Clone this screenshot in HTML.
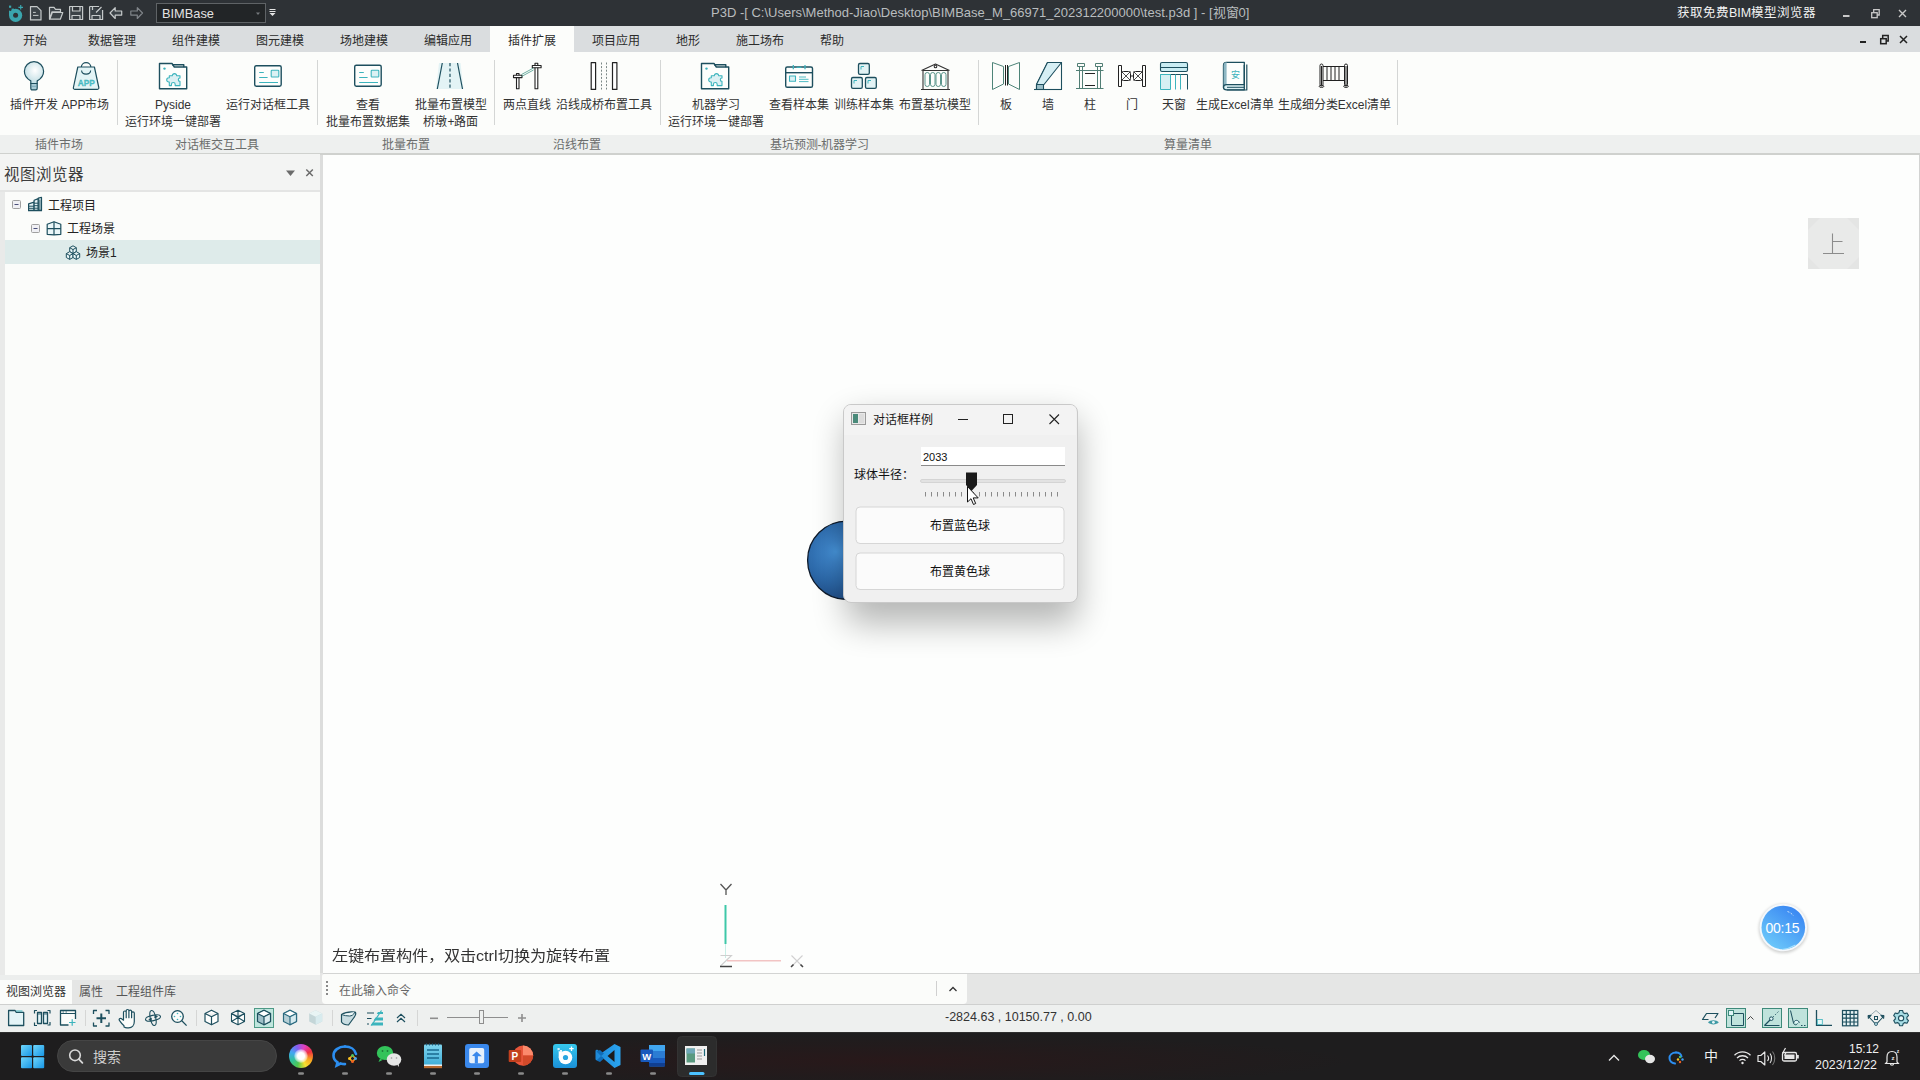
<!DOCTYPE html>
<html lang="zh-CN">
<head>
<meta charset="utf-8">
<style>
*{margin:0;padding:0;box-sizing:border-box}
html,body{width:1920px;height:1080px;overflow:hidden;background:#fdfefd;font-family:"Liberation Sans",sans-serif;font-size:12px;color:#333}
.a{position:absolute}
.t{position:absolute;white-space:nowrap;line-height:1}
#title{left:0;top:0;width:1920px;height:26px;background:#2e3236}
#menu{left:0;top:26px;width:1920px;height:26px;background:#dadddf}
#ribbon{left:0;top:52px;width:1920px;height:83px;background:#fcfdfb}
#glabels{left:0;top:135px;width:1920px;height:18px;background:#eef0ef}
#gline{left:0;top:153px;width:1920px;height:1px;background:#cfd1ce}
#lpanel{left:0;top:154px;width:320px;height:821px;background:#e9eae9}
#lhead{left:0;top:154px;width:320px;height:36px;background:#f3f4f3}
#ltree{left:5px;top:192px;width:315px;height:783px;background:#fbfcfa}
#lsplit{left:320px;top:155px;width:3px;height:820px;background:#dcdddc}
#view{left:323px;top:155px;width:1597px;height:820px;background:#fdfefd}
#cmdbar{left:0;top:973px;width:1920px;height:31px}
#status{left:0;top:1004px;width:1920px;height:28px;background:#eef0ef;border-top:1px solid #cfd0cf}
.mt{top:9px;font-size:12px;color:#2b2b2b}
.rl{width:140px;text-align:center;font-size:12px;color:#333}
.gl{top:4px;width:140px;text-align:center;font-size:12px;color:#6b6d6c}
#taskbar{left:0;top:1032px;width:1920px;height:48px;background:#1e1d1e}
</style>
</head>
<body>
<div id="title" class="a">
<svg class="a" style="left:0;top:0" width="300" height="26" viewBox="0 0 300 26">
 <g fill="#3aa5ad">
  <circle cx="15.6" cy="15.3" r="6.6"/>
  <path d="M9 15.3v-4.8l3.5 1.2v3.6z"/>
  <rect x="11.6" y="8.6" width="2.4" height="2.2"/>
  <rect x="9" y="5.6" width="2.2" height="2.2"/>
  <path d="M20.7 5v4.6M18.4 7.3h4.6" stroke="#3aa5ad" stroke-width="1.2"/>
 </g>
 <circle cx="15.6" cy="15.3" r="2.5" fill="#2e3236"/>
 <g fill="#3b4247" stroke="#c5c9ca" stroke-width="1.2" stroke-linejoin="round">
  <path d="M30.5 6.6h6.5l4 4v9.3h-10.5z"/>
  <path d="M33 12.4h2.8M33 15.4h5.5" stroke-width="1"/>
  <path d="M49.5 7.3h4.5l1.5 2h5v2.5h-8.5l-2.5 7.5z M52.3 12.5h10.5l-2.5 6.7h-10.5z"/>
  <path d="M69.6 6.5h13v13h-13z M72.5 6.5v4.5h7.5v-4.5 M72 19.5v-4h8v4"/>
  <path d="M89.6 6.5h9.5 M102.6 10v9.5h-13v-13 M92.5 6.5v3.5 M92 19.5v-4h8v4 M96 12.5l5.5-5.5"/>
  <path d="M110 13l5.2-5.3v3.3h6.5v4.1h-6.5v3.4z"/>
 </g>
 <path d="M142.5 13l-5.2-5.3v3.3h-6.5v4.1h6.5v3.4z" fill="none" stroke="#80858a" stroke-width="1.2" stroke-linejoin="round"/>
 <rect x="156.5" y="3.5" width="109" height="19" fill="#222527" stroke="#5f6366"/>
 <path d="M256 12.5h4l-2 2.5z" fill="#777b7e"/>
 <path d="M269.5 9.5h6M269.5 11.5h6" stroke="#e6e6e6" stroke-width="1"/><path d="M269.5 13h6l-3 3z" fill="#e6e6e6"/>
</svg>
<div class="t" style="left:162px;top:8px;font-size:12.8px;color:#e2e2e2">BIMBase</div>
<div class="t" id="ttl" style="left:711px;top:6px;font-size:13px;color:#b9bdbf">P3D -[ C:\Users\Method-Jiao\Desktop\BIMBase_M_66971_202312200000\test.p3d ] - [视窗0]</div>
<div class="t" id="ttr" style="left:1677px;top:7px;font-size:12.5px;color:#f2f2f2">获取免费BIM模型浏览器</div>
<svg class="a" style="left:1830px;top:0" width="90" height="26">
 <rect x="13" y="15" width="6.5" height="2" fill="#c9c9c9"/>
 <g fill="none" stroke="#c9c9c9" stroke-width="1.3"><rect x="41.7" y="12.7" width="5.5" height="5"/><path d="M43.7 12.5v-2.8h5.5v5.3h-2"/></g>
 <path d="M69 10l7 7M76 10l-7 7" stroke="#c9c9c9" stroke-width="1.4"/>
</svg>
</div>
<div id="menu" class="a">
<div class="a" style="left:490px;top:0;width:84px;height:26px;background:#fcfdfb"></div>
<div class="t mt" style="left:23px">开始</div>
<div class="t mt" style="left:88px">数据管理</div>
<div class="t mt" style="left:172px">组件建模</div>
<div class="t mt" style="left:256px">图元建模</div>
<div class="t mt" style="left:340px">场地建模</div>
<div class="t mt" style="left:424px">编辑应用</div>
<div class="t mt" style="left:508px">插件扩展</div>
<div class="t mt" style="left:592px">项目应用</div>
<div class="t mt" style="left:676px">地形</div>
<div class="t mt" style="left:736px">施工场布</div>
<div class="t mt" style="left:820px">帮助</div>
<svg class="a" style="left:1830px;top:0" width="90" height="26">
 <rect x="30" y="15" width="6" height="2" fill="#222"/>
 <g fill="none" stroke="#222" stroke-width="1.5"><rect x="50.7" y="12.7" width="5.5" height="5"/><path d="M52.7 12.5v-3h5.5v5.5h-2"/></g>
 <path d="M70 10l7 7M77 10l-7 7" stroke="#222" stroke-width="1.5"/>
</svg>
</div>
<div id="ribbon" class="a">
<div class="t rl" style="left:-36px;top:47px">插件开发</div>
<div class="t rl" style="left:15.5px;top:47px">APP市场</div>
<div class="t rl" style="left:103px;top:47px">Pyside</div>
<div class="t rl" style="left:103px;top:64px">运行环境一键部署</div>
<div class="t rl" style="left:198px;top:47px">运行对话框工具</div>
<div class="t rl" style="left:298px;top:47px">查看</div>
<div class="t rl" style="left:298px;top:64px">批量布置数据集</div>
<div class="t rl" style="left:381px;top:47px">批量布置模型</div>
<div class="t rl" style="left:381px;top:64px">桥墩+路面</div>
<div class="t rl" style="left:457px;top:47px">两点直线</div>
<div class="t rl" style="left:534px;top:47px">沿线成桥布置工具</div>
<div class="t rl" style="left:646px;top:47px">机器学习</div>
<div class="t rl" style="left:646px;top:64px">运行环境一键部署</div>
<div class="t rl" style="left:729px;top:47px">查看样本集</div>
<div class="t rl" style="left:794px;top:47px">训练样本集</div>
<div class="t rl" style="left:865px;top:47px">布置基坑模型</div>
<div class="t rl" style="left:936px;top:47px">板</div>
<div class="t rl" style="left:978px;top:47px">墙</div>
<div class="t rl" style="left:1020px;top:47px">柱</div>
<div class="t rl" style="left:1062px;top:47px">门</div>
<div class="t rl" style="left:1104px;top:47px">天窗</div>
<div class="t rl" style="left:1165px;top:47px">生成Excel清单</div>
<div class="t rl" style="left:1264.5px;top:47px">生成细分类Excel清单</div>
<div class="a" style="left:117px;top:8px;width:1px;height:65px;background:#d4d6d5"></div>
<div class="a" style="left:317px;top:8px;width:1px;height:65px;background:#d4d6d5"></div>
<div class="a" style="left:494px;top:8px;width:1px;height:65px;background:#d4d6d5"></div>
<div class="a" style="left:660px;top:8px;width:1px;height:65px;background:#d4d6d5"></div>
<div class="a" style="left:978px;top:8px;width:1px;height:65px;background:#d4d6d5"></div>
<div class="a" style="left:1397px;top:8px;width:1px;height:65px;background:#d4d6d5"></div>
<svg id="ricons" class="a" style="left:0;top:0" width="1400" height="83"><g transform="translate(0,-52)" fill="none" stroke="#1d4f5e" stroke-width="1.4" stroke-linejoin="round">
 <defs>
  <radialGradient id="bulbg" cx="0.55" cy="0.4" r="0.6"><stop offset="0" stop-color="#ffffff"/><stop offset="1" stop-color="#bfdde3"/></radialGradient>
 </defs>
 <!-- bulb -->
 <path d="M30.8 83.5v-2.6c-3.8-2-6.4-5.6-6.4-9.6a9.6 9.6 0 0 1 19.2 0c0 4-2.6 7.6-6.4 9.6v2.6z" fill="url(#bulbg)" stroke-width="1.2"/>
 <path d="M30.8 83.5h6.4v4.8c0 1-.6 1.6-1.4 1.6h-3.6c-.8 0-1.4-.6-1.4-1.6z" fill="#a8ccd6" stroke-width="1.2"/>
 <path d="M31.5 86.3h5" stroke="#6fa0b0" stroke-width="0.8"/>
 <!-- APP bag -->
 <path d="M81.3 67.5c0-6.5 9.6-6.5 9.6 0" stroke-width="1.2"/>
 <path d="M77.8 67h16.6l4.4 20.5c.2 1-.3 1.8-1.3 1.8h-22.8c-1 0-1.5-.8-1.3-1.8z" fill="#e3f4f6" stroke-width="1.2"/>
 <path d="M81.6 70.5c0 4.8 9 4.8 9 0" stroke-width="1.1"/>
 <text x="86.2" y="85.5" font-family="Liberation Sans" font-size="9.5" font-weight="bold" fill="#4cc4cc" stroke="#3aa8b0" stroke-width="0.3" text-anchor="middle" textLength="17" lengthAdjust="spacingAndGlyphs">APP</text>
 <!-- pyside folder -->
 <g id="pyf">
  <path d="M159.5 63.5h12.5l2.3 3.5h12.4v21.7h-27.2z" fill="#fdfefc"/>
  <path d="M172 64.8h11.8v2.5" />
  <circle cx="164.5" cy="68.6" r="1.2" fill="#3cb4bd" stroke="none"/>
  <path d="M169.3 75.8h3a2.2 2.2 0 1 1 4.4 0h3.3v2.2a1.7 1.7 0 0 0 0 3.4v4.2h-4.8v-1.2a1.9 1.9 0 0 0-3.8 0v1.2h-2.1v-3.6h-.5a2.1 2.1 0 0 1 0-4.2h.5z" fill="#dcf0f3" stroke="#3cb4bd" stroke-width="1.1"/>
 </g>
 <!-- dialog tool -->
 <rect x="254.7" y="65.7" width="26.5" height="20.5" rx="1.6" fill="#fdfefc"/>
 <path d="M259.2 72.5h4.6M259.2 77.5h8.4M259.2 82.5h18.8" stroke="#3cb4bd" stroke-width="1.1"/>
 <rect x="271.2" y="70.2" width="7.6" height="6.8" rx="0.8" fill="#dbf1f3" stroke="#3cb4bd" stroke-width="1.1"/>
 <!-- view dataset -->
 <rect x="354.7" y="65.2" width="26.5" height="21" rx="1.6" fill="#fdfefc"/>
 <path d="M359.2 72.5h4.6M359.2 77.5h8.4M359.2 82.5h18.8" stroke="#3cb4bd" stroke-width="1.1"/>
 <rect x="371.2" y="70.2" width="7.6" height="6.8" rx="0.8" fill="#dbf1f3" stroke="#3cb4bd" stroke-width="1.1"/>
 <!-- road -->
 <path d="M439 63h21.5l3 26h-27.5z" fill="#e3f3f5" stroke="none"/>
 <path d="M442.3 63l-5 26M457.5 63l5 26" stroke-width="1.2"/>
 <path d="M450 63v26" stroke-width="1.2" stroke-dasharray="3.2 2.2"/>
 <!-- two points line -->
 <g stroke="#222" stroke-width="1.1" fill="#fff">
  <rect x="516.5" y="73.5" width="2.5" height="15.2"/>
  <rect x="513.5" y="75.2" width="8.5" height="2.4"/>
  <rect x="535" y="63.3" width="2.8" height="25.4"/>
  <rect x="532.3" y="65.5" width="8.8" height="2.2"/>
 </g>
 <path d="M521.5 74.5l12-6.5M521.5 76.5l12-6.5" stroke="#4a9a8c" stroke-width="0.8"/>
 <!-- bridge along line -->
 <g stroke="#222" stroke-width="1.2" fill="#fff">
  <rect x="591.2" y="62.6" width="4.4" height="26.8"/>
  <rect x="612.5" y="62.6" width="4.4" height="26.8"/>
 </g>
 <path d="M601.5 62.5v27M606.5 62.5v27" stroke="#5a6a6a" stroke-width="0.8" stroke-dasharray="2 1.6"/>
 <!-- ML folder -->
 <g transform="translate(542,0)">
  <path d="M159.5 63.5h12.5l2.3 3.5h12.4v21.7h-27.2z" fill="#fdfefc"/>
  <path d="M172 64.8h11.8v2.5" />
  <circle cx="164.5" cy="68.6" r="1.2" fill="#3cb4bd" stroke="none"/>
  <path d="M169.3 75.8h3a2.2 2.2 0 1 1 4.4 0h3.3v2.2a1.7 1.7 0 0 0 0 3.4v4.2h-4.8v-1.2a1.9 1.9 0 0 0-3.8 0v1.2h-2.1v-3.6h-.5a2.1 2.1 0 0 1 0-4.2h.5z" fill="#dcf0f3" stroke="#3cb4bd" stroke-width="1.1"/>
 </g>
 <!-- calendar samples -->
 <rect x="785.7" y="67" width="26.8" height="20.3" rx="1.6" fill="#fdfefc"/>
 <path d="M785.7 72.7h26.8" />
 <path d="M793.3 65v4.3M805 65v4.3" stroke="#3cb4bd" stroke-width="1.3"/>
 <path d="M796.5 67.3h5" stroke="#3cb4bd" stroke-width="1.2"/>
 <rect x="789.5" y="76" width="6" height="5.3" stroke="#3cb4bd" stroke-width="1.1" fill="#dbf1f3"/>
 <path d="M799 77h7M799 79.3h9.5M799 81.6h9.5" stroke="#3cb4bd" stroke-width="0.9"/>
 <!-- blocks -->
 <g fill="#e2f3f5" stroke-width="1.3">
  <rect x="858.5" y="63.5" width="10.8" height="10.8" rx="1.4"/>
  <rect x="851.5" y="77.5" width="10.8" height="10.8" rx="1.4"/>
  <rect x="865.5" y="77.5" width="10.8" height="10.8" rx="1.4"/>
 </g>
 <path d="M861 69.5v-3h3M854 83.5v-3h3M868 83.5v-3h3" stroke="#3cb4bd" stroke-width="1"/>
 <!-- foundation -->
 <g stroke="#333" stroke-width="1.1">
  <path d="M921.5 70.5l14-6.5 14 6.5M923 70.5v19M948 70.5v19M921 89.5h29M922.8 70.5h25.5"/>
  <circle cx="935.5" cy="66.5" r="1.3"/>
 </g>
 <g stroke="#4a8a80" stroke-width="0.9">
  <rect x="925" y="72.5" width="4.5" height="14" rx="2.2"/>
  <rect x="930.5" y="72.5" width="4.5" height="14" rx="2.2"/>
  <rect x="936" y="72.5" width="4.5" height="14" rx="2.2"/>
  <rect x="941.5" y="72.5" width="4.5" height="14" rx="2.2"/>
 </g>
 <!-- slab -->
 <g stroke="#4e8478" stroke-width="1">
  <path d="M992.5 62.5l11 4v17.5l-11 5.5z"/>
  <path d="M1019.5 62.5l-11 4v17.5l11 5.5z"/>
 </g>
 <path d="M1005.5 65v20.5M1007.5 65v20.5" stroke="#222" stroke-width="1"/>
 <!-- wall -->
 <path d="M1036.5 84.5l11-22h14v27h-25z" fill="#fdfefc" stroke-width="1.1"/>
 <path d="M1036.5 84.5l11-22h14l-17.5 22z" fill="#d6eff4" stroke-width="1.1"/>
 <rect x="1036.5" y="84.5" width="7" height="5" fill="#9cc0c9" stroke-width="1.1"/>
 <path d="M1034 89.5h27.5" stroke-width="1.1"/>
 <!-- column -->
 <g stroke="#507e74" stroke-width="1">
  <rect x="1077.5" y="63.5" width="7" height="3"/>
  <rect x="1095.5" y="63.5" width="7" height="3"/>
  <path d="M1079.5 66.5v22M1082.5 66.5v22M1097.5 66.5v22M1100.5 66.5v22"/>
  <path d="M1076 70.5h27.5M1076 88.5h27.5"/>
 </g>
 <path d="M1085 73.5h10M1085 85.5h10" stroke="#222" stroke-width="1"/>
 <!-- door -->
 <g stroke="#222" stroke-width="1" fill="#fdfefc">
  <rect x="1118.5" y="65.5" width="3" height="21"/>
  <rect x="1142.5" y="65.5" width="3" height="21"/>
  <rect x="1121.5" y="71.5" width="9" height="9" rx="2"/>
  <rect x="1133.5" y="71.5" width="9" height="9" rx="2"/>
  <path d="M1121.5 71.5l9 9M1130.5 71.5l-9 9M1133.5 71.5l9 9M1142.5 71.5l-9 9" stroke-width="0.8"/>
  <path d="M1130.5 76h3" stroke-width="1"/>
 </g>
 <!-- skylight -->
 <rect x="1160.5" y="62.5" width="27" height="9" rx="1.5" fill="#c9ecf2" stroke-width="1.1"/>
 <path d="M1161 67.5h26" stroke-width="1"/>
 <path d="M1160.5 74.5h27v15" fill="none" stroke="#1d4f5e" stroke-width="1"/>
 <rect x="1160.5" y="74.5" width="10" height="15" fill="#d6f0f3" stroke="#3cb4bd" stroke-width="1"/>
 <path d="M1175.5 74.5v15M1180.5 74.5v15" stroke="#3cb4bd" stroke-width="1"/>
 <!-- book -->
 <path d="M1226.5 62.3h17.8v22.5h-17.8c-2 0-3 1-3 2.6v-22c0-1.8 1.2-3.1 3-3.1z" fill="#fdfefc" stroke-width="1.3"/>
 <path d="M1223.6 65.5c0-1.8 1.2-3.2 3-3.2v22.5c-1.8 0-3 1-3 2.6z" fill="#8fb8c4" stroke="none"/>
 <path d="M1244.3 65v24.8h-17.8c-2 0-3-1-3-2.6s1-2.5 3-2.5h17.8" fill="#dcf0f3" stroke-width="1.3"/>
 <path d="M1246.8 64.5v25.5h-20" stroke-width="1.2"/>
 <path d="M1227 87.3h17" stroke-width="1"/>
 <text x="1235.3" y="78" font-size="9" fill="#3cb4bd" stroke="none" text-anchor="middle">安</text>
 <!-- fence -->
 <g stroke="#222" stroke-width="1">
  <path d="M1321.5 66v19.5M1346 66v19.5"/>
  <rect x="1320" y="64" width="3" height="22" rx="1.5"/>
  <rect x="1344.5" y="64" width="3" height="22" rx="1.5"/>
  <ellipse cx="1321.5" cy="86.3" rx="2.3" ry="1.1"/>
  <ellipse cx="1346" cy="86.3" rx="2.3" ry="1.1"/>
  <path d="M1323 66.5h21.5M1323 80.5h21.5M1327 66.5v14M1331 66.5v14M1335 66.5v14M1339 66.5v14"/>
 </g>
</g>
</svg>
</div>
<div id="glabels" class="a">
<div class="t gl" style="left:-11px">插件市场</div>
<div class="t gl" style="left:147px">对话框交互工具</div>
<div class="t gl" style="left:336px">批量布置</div>
<div class="t gl" style="left:507px">沿线布置</div>
<div class="t gl" style="left:749.5px">基坑预测-机器学习</div>
<div class="t gl" style="left:1118px">算量清单</div>
</div>
<div id="gline" class="a"></div>
<div class="a" style="left:320px;top:154px;width:1600px;height:1px;background:#cfd1ce"></div>
<div id="lpanel" class="a"></div>
<div id="lhead" class="a">
 <div class="t" style="left:4px;top:13px;font-size:15.5px;color:#3d3d3d">视图浏览器</div>
 <svg class="a" style="left:280px;top:11px" width="40" height="20"><path d="M6 5.5h9l-4.5 5.5z" fill="#6b6b6b"/><path d="M26.3 4.5l6.5 6.5M32.8 4.5l-6.5 6.5" stroke="#6b6b6b" stroke-width="1.5"/></svg>
</div>
<div id="lhline" class="a" style="left:0;top:190px;width:320px;height:2px;background:#e4e5e4"></div>
<div id="ltree" class="a">
 <div class="a" style="left:0;top:48px;width:315px;height:24px;background:#deebea"></div>
 <svg class="a" style="left:0;top:0" width="120" height="80" viewBox="5 192 120 80">
  <g fill="#f0f0f4" stroke="#a0a0a0" stroke-width="1"><rect x="12.5" y="200.5" width="8" height="8" rx="1"/><rect x="31.5" y="224.5" width="8" height="8" rx="1"/></g>
  <path d="M14.5 204.5h4M33.5 228.5h4" stroke="#4a4f7a" stroke-width="1"/>
  <g fill="#e6f4f6" stroke="#1d4f5e" stroke-width="1.2" stroke-linejoin="round">
   <path d="M28.6 210.4v-6.6l5.5-1.6v8.2z"/>
   <path d="M34.1 210.4v-10.2l4.2-1.6v11.8z"/>
   <path d="M38.3 210.4v-12.2l3.2-0.8v13z"/>
   <path d="M28.6 206.2h5.5M28.6 208.3h5.5M34.1 203.2h4.2M34.1 205.7h4.2M34.1 208.2h4.2M39.9 199.5v10.5" stroke-width="1"/>
   <path d="M28 210.6h14" stroke-width="1.3"/>
  </g>
  <g fill="#eaf6f8" stroke="#1d4f5e" stroke-width="1.2" stroke-linejoin="round">
   <path d="M47.2 224.3l6.8-2.5 6.8 2.5v10l-6.8 0.6-6.8-0.6z"/>
   <path d="M47.2 228.6h13.6M54 221.8v13.1" />
  </g>
  <g fill="#eaf6f8" stroke="#1d4f5e" stroke-width="1" stroke-linejoin="round">
   <path d="M69.7 247.7l3.3-1.9 3.3 1.9v3.9l-3.3 1.9-3.3-1.9z M69.7 247.7l3.3 1.9 3.3-1.9 M73 249.6v3.9"/>
   <path d="M66.3 253.6l3.4-1.9 3.3 1.9v3.9l-3.3 1.9-3.4-1.9z M66.3 253.6l3.4 1.9 3.3-1.9 M69.7 255.5v3.9"/>
   <path d="M73 253.6l3.3-1.9 3.4 1.9v3.9l-3.4 1.9-3.3-1.9z M73 253.6l3.3 1.9 3.4-1.9 M76.3 255.5v3.9"/>
  </g>
 </svg>
 <div class="t" style="left:43px;top:8px;font-size:12px;color:#222">工程项目</div>
 <div class="t" style="left:62px;top:31px;font-size:12px;color:#222">工程场景</div>
 <div class="t" style="left:81px;top:55px;font-size:12px;color:#222">场景1</div>
</div>
<div id="lsplit" class="a"></div>
<div id="view" class="a">
 <div class="a" style="left:1596px;top:0;width:1px;height:818px;background:#d2d3d2"></div>
 <svg class="a" style="left:1485px;top:63px" width="51" height="51" viewBox="1808 218 51 51">
  <rect x="1808" y="218" width="51" height="51" fill="#e4e5e4"/>
  <path d="M1820 218h27l12 12v27l-12 12h-27l-12-12v-27z" fill="#e9eae9"/>
  <path d="M1832.5 233.5v20M1833 241.5h9.5M1823 253.5h21" stroke="#8c8c8c" stroke-width="1.1"/>
 </svg>
 <div class="t" style="left:9px;top:793px;font-size:16.2px;color:#333;transform:scaleY(0.92);transform-origin:0 0">左键布置构件，双击ctrl切换为旋转布置</div>
</div>
<svg class="a" style="left:323px;top:155px" width="1597" height="820" viewBox="323 155 1597 820">
 <defs>
  <radialGradient id="sph" cx="0.36" cy="0.39" r="0.7" fx="0.36" fy="0.39">
   <stop offset="0" stop-color="#4693d8"/>
   <stop offset="0.2" stop-color="#3b80c4"/>
   <stop offset="0.55" stop-color="#2c68a8"/>
   <stop offset="0.85" stop-color="#21508a"/>
   <stop offset="1" stop-color="#163a68"/>
  </radialGradient>
  <filter id="shd" x="-50%" y="-50%" width="200%" height="220%"><feGaussianBlur stdDeviation="17"/></filter>
 </defs>
 <circle cx="846.8" cy="560.3" r="39.2" fill="url(#sph)" stroke="#0e1a2a" stroke-width="1.3"/>
 <rect x="846" y="418" width="232" height="206" rx="10" fill="#000" opacity="0.28" filter="url(#shd)"/>
 <!-- axis -->
 <path d="M725.5 905v39" stroke="#3ec8a8" stroke-width="2"/>
 <path d="M725.5 944v14" stroke="#c8eee6" stroke-width="1"/>
 <path d="M727 960.8h54" stroke="#f2c4c4" stroke-width="1.5"/>
 <path d="M720.5 884l5.5 6 5.5-6M726 890v5" fill="none" stroke="#555" stroke-width="1.3"/>
 <path d="M720.5 955.5h11l-11 10.5" fill="none" stroke="#cfcfcf" stroke-width="1.1"/>
 <path d="M720 966.5h12" stroke="#444" stroke-width="1.5"/>
 <path d="M791.5 955.5l11 11M802.5 955.5l-11 11" stroke="#d0d0d0" stroke-width="1.1"/>
 <path d="M791 967l2.5-2.5M803 967l-2.5-2.5" stroke="#444" stroke-width="1.5"/>
 <!-- timer -->
 <defs><filter id="tsh" x="-50%" y="-50%" width="200%" height="200%"><feGaussianBlur stdDeviation="1.5"/></filter></defs><circle cx="1783.3" cy="928.5" r="24.5" fill="#000" opacity="0.18" filter="url(#tsh)"/><circle cx="1783.3" cy="927.5" r="23.8" fill="#f4f8fc"/>
 <defs><linearGradient id="tmg" x1="0.85" y1="0.05" x2="0.2" y2="0.95"><stop offset="0" stop-color="#3784f2"/><stop offset="1" stop-color="#6cc8fa"/></linearGradient></defs>
 <circle cx="1783.3" cy="927.5" r="21.8" fill="url(#tmg)"/>
 <path d="M1787.5 911.5c2.5 .8 4.5 2.3 6 4.3" fill="none" stroke="#d8ecfc" stroke-width="0.9" stroke-dasharray="2 1.5"/><path d="M1782 949.5c4-.3 9-1.8 13.5-4.5" fill="none" stroke="#a8e0fc" stroke-width="1.2"/>
 <text x="1765.5" y="933.2" font-family="Liberation Sans" font-size="14" fill="#fff" textLength="34" lengthAdjust="spacing">00:15</text>
</svg>
<div id="dlg" class="a" style="left:843px;top:404px;width:235px;height:199px;background:#f0f0f0;border:1px solid #c9c9c9;border-radius:8px;overflow:hidden">
 <div class="a" style="left:0;top:0;width:232px;height:30px;background:#f3f3f3"></div>
 <svg class="a" style="left:0;top:0" width="232" height="196" viewBox="844 405 232 196">
  <rect x="851.5" y="412.5" width="14" height="12" fill="#e8e8e8" stroke="#9a9a9a" stroke-width="1"/>
  <rect x="853" y="414" width="5" height="9" fill="#4a8a7a"/>
  <rect x="859" y="414" width="5" height="9" fill="#dcdcdc"/>
  <path d="M958 419.5h10" stroke="#222" stroke-width="1"/>
  <rect x="1003.5" y="414.5" width="9" height="9" fill="none" stroke="#222" stroke-width="1"/>
  <path d="M1049.5 414.5l9.5 9.5M1059 414.5l-9.5 9.5" stroke="#222" stroke-width="1.1"/>
  <rect x="921" y="447" width="144" height="19" fill="#ffffff"/>
  <path d="M921 465.5h144" stroke="#8a8a8a" stroke-width="1"/>
  <rect x="920.5" y="479.5" width="145" height="3" rx="1.5" fill="#e2e2e2" stroke="#d4d4d4" stroke-width="1"/>
  <path d="M966 472.5h11v12.5l-5.5 6-5.5-6z" fill="#1a1a1a"/>
  <g stroke="#8a8a8a" stroke-width="1">
   <path d="M925.5 492v4.5M931.5 492v4.5M937.5 492v4.5M943.5 492v4.5M949.5 492v4.5M955.5 492v4.5M961.5 492v4.5M967.5 492v4.5M973.5 492v4.5M979.5 492v4.5M985.5 492v4.5M991.5 492v4.5M997.5 492v4.5M1003.5 492v4.5M1009.5 492v4.5M1015.5 492v4.5M1021.5 492v4.5M1027.5 492v4.5M1033.5 492v4.5M1039.5 492v4.5M1045.5 492v4.5M1051.5 492v4.5M1057.5 492v4.5"/>
  </g>
  <path d="M967.5 486.5v15.5l3.5-3.3 2.5 5.8 2.2-1-2.5-5.6h5z" fill="#fff" stroke="#111" stroke-width="1" stroke-linejoin="round"/>
  <rect x="856" y="507" width="208" height="36.5" rx="4" fill="#fbfbfb" stroke="#d6d6d6" stroke-width="1"/>
  <rect x="856" y="553" width="208" height="36.5" rx="4" fill="#fbfbfb" stroke="#d6d6d6" stroke-width="1"/>
 </svg>
 <div class="t" style="left:29px;top:9px;font-size:12px;color:#1a1a1a">对话框样例</div>
 <div class="t" style="left:79px;top:47px;font-size:11px;color:#111">2033</div>
 <div class="t" style="left:10px;top:64px;font-size:12px;color:#111">球体半径：</div>
 <div class="t" style="left:86px;top:115px;font-size:12px;color:#111">布置蓝色球</div>
 <div class="t" style="left:86px;top:161px;font-size:12px;color:#111">布置黄色球</div>
</div>

<div id="cmdbar" class="a">
 <div class="a" style="left:0;top:2px;width:320px;height:5px;background:#eceeed"></div>
 <div class="a" style="left:0;top:7px;width:320px;height:24px;background:#e5e6e5"></div>
 <div class="a" style="left:320px;top:0;width:1600px;height:31px;background:#e5e6e5"></div>
 <div class="a" style="left:323px;top:0;width:1597px;height:1px;background:#d3d4d3"></div>
 <div class="a" style="left:0;top:7px;width:72px;height:24px;background:#fbfcfa"></div>
 <div class="t" style="left:6px;top:13px;font-size:12px;color:#333">视图浏览器</div>
 <div class="t" style="left:79px;top:13px;font-size:12px;color:#555">属性</div>
 <div class="t" style="left:116px;top:13px;font-size:12px;color:#555">工程组件库</div>
 <div class="a" style="left:322px;top:1px;width:645px;height:30px;background:#fbfcfa;border-radius:2px 0 4px 4px"></div>
 <svg class="a" style="left:322px;top:1px" width="645" height="30" viewBox="322 974 645 30"><g fill="#8a8a8a"><rect x="326" y="981" width="2" height="2"/><rect x="326" y="985" width="2" height="2"/><rect x="326" y="989" width="2" height="2"/><rect x="326" y="993" width="2" height="2"/></g><path d="M936.5 981v15" stroke="#d0d0d0"/><path d="M949.5 991l3.5-3.5 3.5 3.5" fill="none" stroke="#333" stroke-width="1.3"/></svg>
 <div class="t" style="left:339px;top:12px;font-size:12px;color:#666">在此输入命令</div>
</div>
<div id="status" class="a">
<svg class="a" style="left:0;top:0" width="1920" height="27" viewBox="0 1005 1920 27">
 <g fill="#e4f4f7" stroke="#1d4f5e" stroke-width="1.3" stroke-linejoin="round">
  <!-- folder -->
  <path d="M8.6 1010.5h6.5l1.2 1.8h7.4v13.2h-15.1z"/>
  <path d="M16 1011h6.5" stroke="#3cb4bd" stroke-width="1"/>
  <!-- split -->
  <path d="M34.5 1013.5v-3h2.5M47.5 1010.5h2.5v3M50 1022v3h-2.5M37 1025.5h-2.5v-3" fill="none" stroke-width="1.2"/>
  <rect x="37.5" y="1012.5" width="4" height="11"/>
  <rect x="43.5" y="1012.5" width="4" height="11"/>
  <path d="M37.5 1014h4M43.5 1014h4" stroke-width="0.8"/>
  <!-- window plus -->
  <path d="M75.5 1019v-8.5h-15v14.5h8" fill="#fbfcfa"/>
  <path d="M60.5 1013.5h15" stroke-width="1"/>
  <path d="M62.5 1012h1.5M65.5 1012h1.5" stroke-width="0.8"/>
  <path d="M69 1022.5h6.5M72.2 1019.2v6.5" stroke="#3cb4bd" stroke-width="1.2"/>
 </g>
 <path d="M85.5 1010v16M196.5 1010v16M332.5 1010v16M417.5 1010v16" stroke="#d5d6d5" stroke-width="1"/>
 <g fill="none" stroke="#1d4f5e" stroke-width="1.3" stroke-linejoin="round">
  <!-- fit -->
  <path d="M93.5 1014v-3.5h3.5M105.5 1010.5h3.5v3.5M109 1022.5v3.5h-3.5M97 1026h-3.5v-3.5"/>
  <path d="M101.3 1013.5v9.5M96.5 1018.3h9.5" stroke-width="2"/>
  <!-- hand -->
  <path d="M124 1025.8c-1.6-1.4-3.4-3.6-4.6-5.4-.8-1.2.6-2.6 1.8-1.8l2.3 1.6v-8c0-1.6 2.7-1.6 2.7 0v5.5-7c0-1.6 2.7-1.6 2.7 0v7-6.3c0-1.6 2.7-1.6 2.7 0v6.3-4.6c0-1.6 2.7-1.6 2.7 0v8.4c0 3.8-2.3 6.3-5.6 6.3h-1.7c-1 0-1.8-.2-3-.8z" fill="#fbfcfa" stroke-width="1.2"/>
  <!-- rotate -->
  <ellipse cx="153" cy="1018" rx="7.6" ry="2.7" transform="rotate(-12 153 1018)" stroke-width="1.1"/>
  <ellipse cx="153" cy="1018" rx="2.7" ry="7.6" transform="rotate(-12 153 1018)" stroke-width="1.1"/>
  <path d="M155.2 1015.3l2.2 1.2-2.6 1.4z M151 1020.8l-2.2-1.2 2.6-1.4z" fill="#1d4f5e" stroke-width="0.9"/>
  <!-- zoom -->
  <circle cx="177.5" cy="1016.5" r="5.8" fill="#fbfcfa"/>
  <path d="M181.8 1020.8l4.8 4.8"/>
 </g>
 <g fill="#3cb4bd"><circle cx="177.5" cy="1013.5" r="0.8"/><circle cx="174.5" cy="1016.5" r="0.8"/><circle cx="180.5" cy="1016.5" r="0.8"/><circle cx="177.5" cy="1019.5" r="0.8"/></g>
 <!-- cubes -->
 <rect x="254.5" y="1008.5" width="19" height="19" fill="#bfe6de" stroke="#4e9a86" stroke-width="1"/>
 <g stroke="#1d4f5e" stroke-width="1.2" stroke-linejoin="round">
  <path d="M205 1013.5l6.5-3.3 6.5 3.3v8l-6.5 3.3-6.5-3.3z M205 1013.5l6.5 3.3 6.5-3.3 M211.5 1016.8v8" fill="#fdfefd"/>
  <path d="M231.5 1013.5l6.5-3.3 6.5 3.3v8l-6.5 3.3-6.5-3.3z M231.5 1013.5l6.5 3.3 6.5-3.3 M238 1016.8v8 M231.5 1021.5l13-8 M244.5 1021.5l-13-8 M238 1010.2v6.6" fill="#fdfefd" stroke-width="1.1"/>
  <path d="M257.5 1013.5l6.5-3.3 6.5 3.3v8l-6.5 3.3-6.5-3.3z" fill="#9fc0c8"/>
  <path d="M257.5 1013.5l6.5-3.3 6.5 3.3-6.5 3.3z" fill="#ffffff"/>
  <path d="M264 1016.8v8l6.5-3.3v-8z" fill="#dcecef"/>
  <path d="M283.5 1013.5l6.5-3.3 6.5 3.3v8l-6.5 3.3-6.5-3.3z" fill="#b5cfd6" stroke="#2c6b80"/>
  <path d="M283.5 1013.5l6.5-3.3 6.5 3.3-6.5 3.3z" fill="#fdfefd" stroke="#2c6b80"/>
  <path d="M290 1016.8v8l6.5-3.3v-8z" fill="#d6eaef" stroke="#2c6b80"/>
 </g>
 <g stroke="none">
  <path d="M309.2 1013.5l6.5-3.3 6.5 3.3v8l-6.5 3.3-6.5-3.3z" fill="#c4d6d8"/>
  <path d="M309.2 1013.5l6.5-3.3 6.5 3.3-6.5 3.3z" fill="#e8f4f4"/>
  <path d="M315.7 1016.8v8l6.5-3.3v-8z" fill="#d8ebee"/>
 </g>
 <!-- lens -->
 <path d="M341.5 1014.5c3-2 9-3 13.5-2.5 1.5 1 .5 3.5-1 5.5l-5.5 7.5c-3 0-6-1.5-7-3z" fill="#c9dde2" stroke="#1d4f5e" stroke-width="1.2" stroke-linejoin="round"/>
 <path d="M341.5 1014.5c3 1 5 1.5 8 1.5 2 0 4-1 5.5-4" fill="#eef7f8" stroke="#1d4f5e" stroke-width="1"/>
 <!-- lines -->
 <path d="M367 1013h7M367 1018.5h4.5M367 1024h2" stroke="#1d4f5e" stroke-width="1.2"/>
 <path d="M371.5 1025.5l10-15" stroke="#3cb4bd" stroke-width="1.2"/>
 <path d="M378 1012h5v2h-6.3z M375.5 1017.5h7.5v3h-9.5z M372.5 1022.5h10.5v3h-12.5z" fill="#3cb4bd"/>
 <!-- double caret -->
 <path d="M397 1018l4-3.7 4 3.7M397 1022l4-3.7 4 3.7" fill="none" stroke="#1d4f5e" stroke-width="1.2"/>
 <!-- zoom slider -->
 <g stroke="#8e8e8e" fill="none">
  <path d="M430 1018.3h8" stroke-width="1.6"/>
  <path d="M447 1017.5h61" stroke-width="1"/>
  <rect x="479.5" y="1010.5" width="4" height="13" fill="#eef0ef" stroke-width="1"/>
  <path d="M518 1018h8M522 1014v8" stroke-width="1.6"/>
 </g>
 <!-- right icons -->
 <path d="M1708.5 1019.5h-6l4-6h11.5l-3 4.5" fill="none" stroke="#1d4f5e" stroke-width="1.2" stroke-linejoin="round"/>
 <path d="M1708 1022.3c2.2-2.8 8.6-2.8 10.8 0-2.2 2.8-8.6 2.8-10.8 0z" fill="#3e9aa5"/>
 <circle cx="1713.4" cy="1022.3" r="1.4" fill="#e8f6f8"/>
 <g fill="#bfe3dc" stroke="#3e8a7a" stroke-width="1"><rect x="1726.5" y="1008.5" width="19" height="19"/><rect x="1762.5" y="1008.5" width="19" height="19"/><rect x="1788.5" y="1008.5" width="19" height="19"/></g>
 <path d="M1731.5 1013.5h12v12h-12z" fill="none" stroke="#1d4f5e" stroke-width="1"/>
 <rect x="1728.5" y="1010.5" width="5" height="5" fill="#dff6f8" stroke="#3e8a7a" stroke-width="1"/>
 <path d="M1747.5 1019.5l3-3 3 3" fill="none" stroke="#333" stroke-width="0.9"/>
 <path d="M1764.5 1025.5h15" stroke="#1d4f5e" stroke-width="1"/>
 <path d="M1764.5 1025.5l5.5-5.5" stroke="#1d4f5e" stroke-width="1.2"/>
 <circle cx="1771.3" cy="1018.7" r="1.8" fill="#dff6f8" stroke="#1d4f5e" stroke-width="1"/>
 <path d="M1772.8 1017.2l6.5-6.5" stroke="#1d4f5e" stroke-width="0.8" stroke-dasharray="1.6 1.6"/>
 <path d="M1790.5 1010.5l3 12.5c.5 2 3 2.5 4 .5" fill="none" stroke="#1d4f5e" stroke-width="1"/>
 <path d="M1793.8 1022.8c.3-3.3 5.2-3.3 5.4.2" fill="#dff6f8" stroke="#1d4f5e" stroke-width="1"/>
 <path d="M1801 1025.5h1.5M1804 1025.5h1.5" stroke="#1d4f5e" stroke-width="1"/>
 <path d="M1816.5 1010v15.3h15.5" fill="none" stroke="#1d4f5e" stroke-width="1.3"/>
 <rect x="1817.3" y="1019.5" width="5" height="5" fill="#e6f8f8" stroke="#3cb4bd" stroke-width="0.8"/>
 <rect x="1842.5" y="1010.5" width="15.3" height="15.3" fill="#e7f2f3" stroke="#1d4f5e" stroke-width="1.2"/>
 <path d="M1846.3 1010.5v15.3M1850.2 1010.5v15.3M1854 1010.5v15.3M1842.5 1014.4h15.3M1842.5 1018.2h15.3M1842.5 1022h15.3" stroke="#1d4f5e" stroke-width="1.2"/>
 <path d="M1869 1016.5l7-6 7 6" fill="none" stroke="#8aa0a8" stroke-width="0.9"/>
 <path d="M1869 1017l6 6.5M1883 1017l-6 6.5" fill="none" stroke="#1d4f5e" stroke-width="1.1"/>
 <path d="M1868 1015.5l3.2-.2-2.8 3.2z M1884 1015.5l-3.2-.2 2.8 3.2z" fill="#1d4f5e" stroke="#1d4f5e" stroke-width="1"/>
 <rect x="1874.5" y="1016.5" width="3" height="3" fill="none" stroke="#1d4f5e" stroke-width="1"/>
 <circle cx="1876" cy="1024" r="1.5" fill="#b8e0ec" stroke="#1d4f5e" stroke-width="0.8"/>
 <path d="M1899.6 1010.5h3l.6 2.2 1.6.9 2.2-.6 1.5 2.6-1.6 1.6v1.8l1.6 1.6-1.5 2.6-2.2-.6-1.6.9-.6 2.2h-3l-.6-2.2-1.6-.9-2.2.6-1.5-2.6 1.6-1.6v-1.8l-1.6-1.6 1.5-2.6 2.2.6 1.6-.9z" fill="#a8dde5" stroke="#1d4f5e" stroke-width="1.1" stroke-linejoin="round"/>
 <circle cx="1901.1" cy="1018.2" r="2.6" fill="#eef7f8" stroke="#1d4f5e" stroke-width="1.1"/>
</svg>

<div class="t" id="coord" style="left:945px;top:6px;font-size:12.5px;color:#333">-2824.63 , 10150.77 , 0.00</div>
</div>
<div id="taskbar" class="a">
 <div class="a" style="left:0;top:0;width:1920px;height:1px;background:#2f2f2f"></div>
 <div class="a" style="left:600px;top:0;width:800px;height:48px;background:radial-gradient(ellipse at 35% 60%, rgba(50,20,22,0.5), rgba(0,0,0,0) 65%)"></div>
 <svg class="a" style="left:0;top:0" width="1920" height="48" viewBox="0 1032 1920 48">
  <defs>
   <linearGradient id="wing" x1="0" y1="0" x2="1" y2="1"><stop offset="0" stop-color="#6fd6fb"/><stop offset="1" stop-color="#1796e6"/></linearGradient>
   <linearGradient id="cw1" x1="0" y1="0" x2="1" y2="1"><stop offset="0" stop-color="#34a0f0"/><stop offset="0.5" stop-color="#f040a0"/><stop offset="1" stop-color="#f03020"/></linearGradient>
   <linearGradient id="np" x1="0" y1="0" x2="0" y2="1"><stop offset="0" stop-color="#7fd4ee"/><stop offset="1" stop-color="#38a8d4"/></linearGradient>
   <linearGradient id="bb" x1="0" y1="0" x2="0" y2="1"><stop offset="0" stop-color="#36c8ec"/><stop offset="1" stop-color="#1a90d8"/></linearGradient>
   <linearGradient id="vs" x1="0" y1="0" x2="1" y2="0"><stop offset="0" stop-color="#1e88d6"/><stop offset="1" stop-color="#2aa4f0"/></linearGradient>
   <radialGradient id="wheel" cx="0.5" cy="0.5" r="0.5"><stop offset="0" stop-color="#ffffff"/><stop offset="0.3" stop-color="#ffffff"/><stop offset="0.45" stop-color="#f8e040"/><stop offset="1" stop-color="#30b050"/></radialGradient>
  </defs>
  <!-- start -->
  <rect x="21" y="1045" width="11" height="11" rx="1" fill="url(#wing)"/>
  <rect x="33.2" y="1045" width="11" height="11" rx="1" fill="url(#wing)"/>
  <rect x="21" y="1057.2" width="11" height="11" rx="1" fill="url(#wing)"/>
  <rect x="33.2" y="1057.2" width="11" height="11" rx="1" fill="url(#wing)"/>
  <!-- search pill -->
  <rect x="57.5" y="1040.5" width="219" height="31" rx="15.5" fill="#3a3a3a" stroke="#454545"/>
  <circle cx="75" cy="1055.3" r="5.3" fill="none" stroke="#d8d8d8" stroke-width="1.6"/>
  <path d="M78.8 1059.2l3.6 3.6" stroke="#d8d8d8" stroke-width="1.8" stroke-linecap="round"/>
  <!-- wecom -->
  <path d="M345 1046.5c-6.5 0-11.5 4-11.5 9 0 2.8 1.5 5.2 4 6.8l-.8 3.2 3.8-2c1.4.4 2.9.6 4.5.6" fill="none" stroke="#2c8ef0" stroke-width="2.6" stroke-linecap="round"/>
  <path d="M345 1046.5c5.5 0 10 3 11 7.5" fill="none" stroke="#2c8ef0" stroke-width="2.6" stroke-linecap="round"/>
  <path d="M349.5 1058.5l3-3 3 3-3 3z" fill="none" stroke="#f0a020" stroke-width="1.6"/>
  <circle cx="352.5" cy="1055.5" r="1.5" fill="#4cc060"/><circle cx="349.5" cy="1058.5" r="1.5" fill="#f8c020"/><circle cx="352.5" cy="1061.5" r="1.5" fill="#f06020"/><circle cx="355.5" cy="1058.5" r="1.5" fill="#40a0f0"/>
  <!-- wechat -->
  <ellipse cx="385" cy="1053" rx="8.2" ry="7" fill="#33c35a"/>
  <path d="M380 1058.5l-1.5 3.5 4-2z" fill="#33c35a"/>
  <ellipse cx="394" cy="1059.5" rx="7.3" ry="6.2" fill="#e6e6e6"/>
  <path d="M397 1064.5l2 2.5-.3-3.5z" fill="#e6e6e6"/>
  <circle cx="382.5" cy="1051" r="0.9" fill="#1f7a3a"/><circle cx="387.5" cy="1051" r="0.9" fill="#1f7a3a"/>
  <circle cx="391.5" cy="1058" r="0.8" fill="#9a9a9a"/><circle cx="396.5" cy="1058" r="0.8" fill="#9a9a9a"/>
  <!-- notepad -->
  <rect x="424" y="1044.5" width="18" height="23.5" rx="1" fill="url(#np)"/>
  <rect x="424" y="1066" width="18" height="2.2" fill="#b86a30"/>
  <rect x="424" y="1064.5" width="18" height="1.5" fill="#f0f0f0"/>
  <path d="M427 1050h12M427 1054h12M427 1058h12" stroke="#1a6a90" stroke-width="1.6"/>
  <path d="M426.5 1043.5v2M429.5 1043.5v2M432.5 1043.5v2M435.5 1043.5v2M438.5 1043.5v2" stroke="#1a5a7a" stroke-width="1"/>
  <!-- blue app -->
  <rect x="465" y="1044" width="24" height="24" rx="3" fill="#3a88ec"/>
  <rect x="469.2" y="1048" width="15" height="15.3" rx="1.8" fill="#e6f0fc"/>
  <path d="M472 1055.8l4.6-4.3 5.2 4.8h-3.9v7.3h-3.1v-7.3z" fill="#3a88ec"/>
  <!-- ppt -->
  <circle cx="523" cy="1055.6" r="10.2" fill="#e8553a"/>
  <path d="M523 1045.4a10.2 10.2 0 0 1 10.2 10.2h-10.2z" fill="#fb8a6c"/>
  <path d="M523 1055.6h10.2a10.2 10.2 0 0 1-10.2 10.2z" fill="#d24a2a"/>
  <rect x="508.7" y="1050" width="12.5" height="12" rx="1" fill="#c3401e"/>
  <text x="514.9" y="1060" font-family="Liberation Sans" font-size="10" font-weight="bold" fill="#fff" text-anchor="middle">P</text>
  <!-- bimbase -->
  <rect x="553" y="1044" width="24" height="24" rx="3" fill="url(#bb)"/>
  <circle cx="565.5" cy="1057.5" r="6.8" fill="#fff"/>
  <path d="M558.7 1057.5v-6.5l3.2 1.2v5.3z" fill="#fff"/>
  <circle cx="565.5" cy="1057.5" r="2.6" fill="#28a6e0"/>
  <rect x="557.5" y="1048" width="2.2" height="2.2" fill="#cfeefa"/><rect x="560" y="1050" width="2" height="2" fill="#e8f8fc"/>
  <path d="M571.5 1046.5v4.5M569.2 1048.7h4.5" stroke="#fff" stroke-width="1.3"/>
  <!-- vscode -->
  <path d="M614.5 1044l6 3v18l-6 3-13-11-4.5 3.5-1.5-1v-9l1.5-1 4.5 3.5z" fill="url(#vs)"/>
  <path d="M614.5 1050l-7 6 7 6z" fill="#1c1c1c"/>
  <path d="M596.5 1051.5l3.5-1.5 4 3.5-3 2.5z M596.5 1060.5l3.5 1.5 4-3.5-3-2.5z" fill="#0f6cb8"/>
  <!-- word -->
  <rect x="649" y="1045" width="16" height="21.5" rx="1.5" fill="#2b7cd3"/>
  <rect x="649" y="1045" width="16" height="6" fill="#41a5ee"/>
  <rect x="649" y="1058" width="16" height="5" fill="#185abd"/>
  <rect x="649" y="1063" width="16" height="3.5" fill="#103f91"/>
  <rect x="640.5" y="1049.5" width="12.5" height="12.5" rx="1" fill="#185abd"/>
  <text x="646.8" y="1059.5" font-family="Liberation Sans" font-size="9.5" font-weight="bold" fill="#fff" text-anchor="middle">W</text>
  <!-- active app -->
  <rect x="677.5" y="1036.5" width="39" height="40" rx="4" fill="#2c2c2c" stroke="#333"/>
  <rect x="685" y="1046" width="22" height="19" fill="#f0f0f0"/>
  <rect x="686.5" y="1048.5" width="8.5" height="14" fill="#5a9a80"/>
  <rect x="686.5" y="1048.5" width="8.5" height="5" fill="#6fa8b8"/>
  <path d="M697 1050h5M697 1053h5M697 1056h5M697 1059h5" stroke="#999" stroke-width="1"/>
  <path d="M704.5 1049v7" stroke="#1e6a7a" stroke-width="1.2"/>
  <rect x="689" y="1072" width="15.5" height="3" rx="1.5" fill="#4cc2ff"/>
  <!-- dots -->
  <g fill="#8a8a8a">
   <rect x="298" y="1072.3" width="6" height="2.5" rx="1.25"/>
   <rect x="342" y="1072.3" width="6" height="2.5" rx="1.25"/>
   <rect x="386" y="1072.3" width="6" height="2.5" rx="1.25"/>
   <rect x="430" y="1072.3" width="6" height="2.5" rx="1.25"/>
   <rect x="474" y="1072.3" width="6" height="2.5" rx="1.25"/>
   <rect x="518" y="1072.3" width="6" height="2.5" rx="1.25"/>
   <rect x="562" y="1072.3" width="6" height="2.5" rx="1.25"/>
   <rect x="606" y="1072.3" width="6" height="2.5" rx="1.25"/>
   <rect x="650" y="1072.3" width="6" height="2.5" rx="1.25"/>
  </g>
  <!-- tray -->
  <path d="M1609 1060.5l5-5 5 5" fill="none" stroke="#e8e8e8" stroke-width="1.3"/>
  <ellipse cx="1644" cy="1055" rx="6" ry="5" fill="#33c35a"/>
  <ellipse cx="1650" cy="1059" rx="5" ry="4.2" fill="#e6e6e6"/>
  <path d="M1676 1052.5c-4 0-6.5 2.5-6.5 5.5 0 3 2.5 5 5.5 5.5" fill="none" stroke="#2c8ef0" stroke-width="2" stroke-linecap="round"/>
  <path d="M1676 1052.5c3 0 5 1.5 5.5 4" fill="none" stroke="#2c8ef0" stroke-width="2" stroke-linecap="round"/>
  <circle cx="1680" cy="1057" r="1.2" fill="#4cc060"/><circle cx="1678" cy="1059.5" r="1.2" fill="#f8c020"/><circle cx="1680" cy="1062" r="1.2" fill="#f06020"/><circle cx="1682.5" cy="1059.5" r="1.2" fill="#40a0f0"/>
  <path d="M1734.5 1055.3c4.5-4.5 11.5-4.5 16 0M1737 1058c3-3 8-3 11 0M1739.5 1060.6c1.6-1.6 4.4-1.6 6 0" fill="none" stroke="#e8e8e8" stroke-width="1.3"/>
  <circle cx="1742.5" cy="1063" r="1.2" fill="#e8e8e8"/>
  <path d="M1758 1055.5h2.8l4-3.5v13l-4-3.5h-2.8z" fill="none" stroke="#e8e8e8" stroke-width="1.2" stroke-linejoin="round"/>
  <path d="M1767.5 1055.5c1.2 1.5 1.2 4 0 5.5M1770 1053.5c2 2.5 2 7 0 9.5" fill="none" stroke="#e8e8e8" stroke-width="1.1"/>
  <path d="M1772.5 1051.5c3 3.5 3 10 0 13.5" fill="none" stroke="#777" stroke-width="1.1"/>
  <rect x="1782.5" y="1052.5" width="14" height="8.5" rx="1.5" fill="none" stroke="#e8e8e8" stroke-width="1.3"/>
  <rect x="1784.5" y="1054.5" width="10" height="4.5" fill="#e8e8e8"/>
  <rect x="1797" y="1055" width="1.8" height="3.5" fill="#e8e8e8"/>
  <path d="M1785.5 1048l-2.5 4.5h3l-1.5 3" fill="none" stroke="#e8e8e8" stroke-width="1.2"/>
  <path d="M1887 1062v-5c0-3.5 2-5.5 5-5.5s5 2 5 5.5v5l1.3 1.5h-12.6z M1890.5 1064c0 1.5 3 1.5 3 0" fill="none" stroke="#e8e8e8" stroke-width="1.2"/>
  <text x="1893" y="1060" font-family="Liberation Sans" font-size="6" font-weight="bold" fill="#e8e8e8" text-anchor="middle">z</text>
  <text x="1898" y="1053" font-family="Liberation Sans" font-size="5" font-weight="bold" fill="#e8e8e8" text-anchor="middle">z</text>
 </svg>
 <div class="t" style="left:93px;top:18px;font-size:14px;color:#cfcfcf">搜索</div>
 <div class="a" style="left:289px;top:12px;width:24px;height:24px;border-radius:50%;background:conic-gradient(from 20deg,#e040c0,#f03040,#f8a020,#f8e030,#50c850,#30c0a0,#40a8f0,#8060f0,#e040c0);filter:blur(0.4px)"></div>
 <div class="a" style="left:294px;top:17px;width:14px;height:14px;border-radius:50%;background:radial-gradient(circle,#ffffff 0,#ffffff 35%,rgba(255,255,255,0.5) 60%,rgba(255,255,255,0) 75%)"></div>
 <div class="t" style="left:1704px;top:17px;font-size:14px;color:#f0f0f0">中</div>
 <div class="t" style="left:1849px;top:11px;font-size:12px;color:#f0f0f0">15:12</div>
 <div class="t" style="left:1815px;top:26.5px;font-size:12.4px;color:#f0f0f0">2023/12/22</div>
</div>

</body>
</html>
